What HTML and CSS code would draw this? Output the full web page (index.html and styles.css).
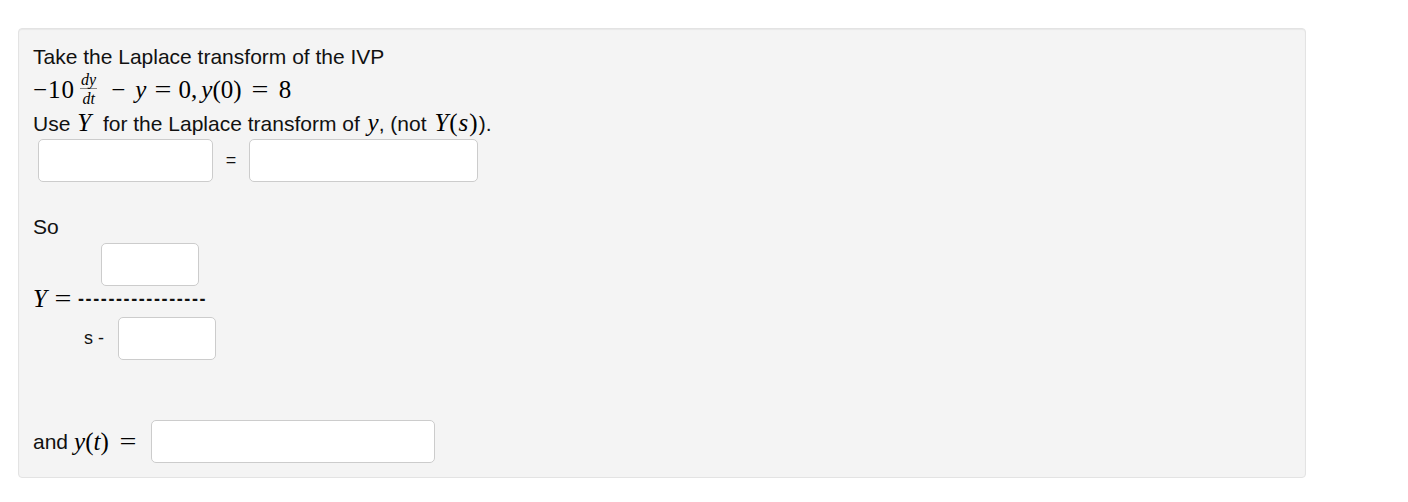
FILE: index.html
```html
<!DOCTYPE html>
<html>
<head>
<meta charset="utf-8">
<link rel="stylesheet" href="styles.css">
</head>
<body>
<div class="well">
  <div class="line l1">Take the Laplace transform of the IVP</div>
  <div class="line l2 math">
    <span class="num">−10</span><span class="frac"><span class="ft"><i>dy</i></span><span class="fb"><i>dt</i></span></span><span class="op">−</span><i>y</i><span class="op eqs">=</span>0,<i class="sp">y</i>(0)<span class="op eqs2">=</span>8
  </div>
  <div class="line l3">Use <i class="m big mY">Y</i> for the Laplace transform of <i class="m big my">y</i>, (not <span class="m big mYs"><i>Y</i>(<i>s</i>)</span>).</div>
  <div class="row eqrow">
    <span class="box b1"></span>
    <span class="eq">=</span>
    <span class="box b2"></span>
  </div>
  <div class="line so">So</div>
  <div class="fracblock">
    <div class="numrow"><span class="box small"></span></div>
    <div class="midrow"><span class="m big"><i>Y</i></span><span class="m big eqm">=</span><span class="dashes">-----------------</span></div>
    <div class="denrow"><span class="sminus">s -</span><span class="box small"></span></div>
  </div>
  <div class="row androw">
    <span>and</span><span class="m big yt"><i>y</i>(<i>t</i>)</span><span class="m big eqm2">=</span><span class="box b3"></span>
  </div>
</div>
</body>
</html>
```
FILE: styles.css
```css
html, body {
  margin: 0;
  padding: 0;
  background: #fff;
}
body {
  padding: 28px 0 0 18px;
  font-family: "Liberation Sans", Arial, sans-serif;
  font-size: 21px;
  color: #111;
}
.well {
  box-sizing: border-box;
  width: 1288px;
  height: 450px;
  background: #f4f4f4;
  border: 1px solid #e3e3e3;
  border-radius: 4px;
  box-shadow: inset 0 1px 1px rgba(0,0,0,0.05);
  padding: 16px 14px;
}
.line {
  white-space: nowrap;
}
.l1 {
  height: 24px;
  line-height: 24px;
}
.math, .m {
  font-family: "Liberation Serif", "Times New Roman", serif;
}
.m i, i.m, .math i {
  font-style: italic;
}
.l2 {
  height: 42px;
  display: flex;
  align-items: center;
  font-size: 25px;
  color: #000;
}
.num { letter-spacing: 1px; }
.frac {
  display: inline-flex;
  flex-direction: column;
  align-items: center;
  font-size: 16px;
  line-height: 15px;
  margin: 0 2px 0 5px;
  position: relative;
  top: -1px;
}
.ft { display: block; border-bottom: 1px solid #888; padding: 0 1px 1px; }
.fb { display: block; padding-top: 2px; }
.op { margin: 0 10px 0 12px; }
.eqs { margin: 0 8px 0 10px; display: inline-block; transform: scaleX(1.2); }
.eqs2 { margin: 0 12px 0 11px; display: inline-block; transform: scaleX(1.2); }
.sp { margin-left: 4px; }
.l3 {
  height: 24px;
  line-height: 24px;
}
.mY { margin: 0 6px 0 1px; }
.my { margin-left: 2px; }
.mYs { margin-left: 2px; letter-spacing: 1px; }
.big { font-size: 25px; color: #000; }
.row {
  display: flex;
  align-items: center;
}
.box {
  display: inline-block;
  box-sizing: border-box;
  height: 43px;
  background: #fff;
  border: 1px solid #ccc;
  border-radius: 5px;
}
.eqrow { margin-top: 4px; padding-left: 5px; }
.b1 { width: 175px; }
.eq { width: 36px; text-align: center; font-size: 18px; }
.b2 { width: 229px; }
.so { margin-top: 33px; height: 24px; line-height: 24px; }
.fracblock { margin-top: 4px; }
.numrow { padding-left: 68px; height: 43px; }
.small { width: 98px; }
.midrow {
  height: 26px;
  display: flex;
  align-items: center;
}
.eqm { margin: 0 6px 0 9px; display: inline-block; transform: scaleX(1.2); }
.dashes { font-size: 18px; letter-spacing: 1.6px; font-weight: bold; margin-left: 2px; }
.denrow {
  display: flex;
  align-items: center;
  padding-left: 51px;
  margin-top: 5px;
}
.sminus { width: 34px; font-size: 18px; }
.androw { margin-top: 60px; }
.yt { margin-left: 6px; }
.eqm2 { margin: 0 16px 0 12px; display: inline-block; transform: scaleX(1.2); }
.b3 { width: 284px; }
```
